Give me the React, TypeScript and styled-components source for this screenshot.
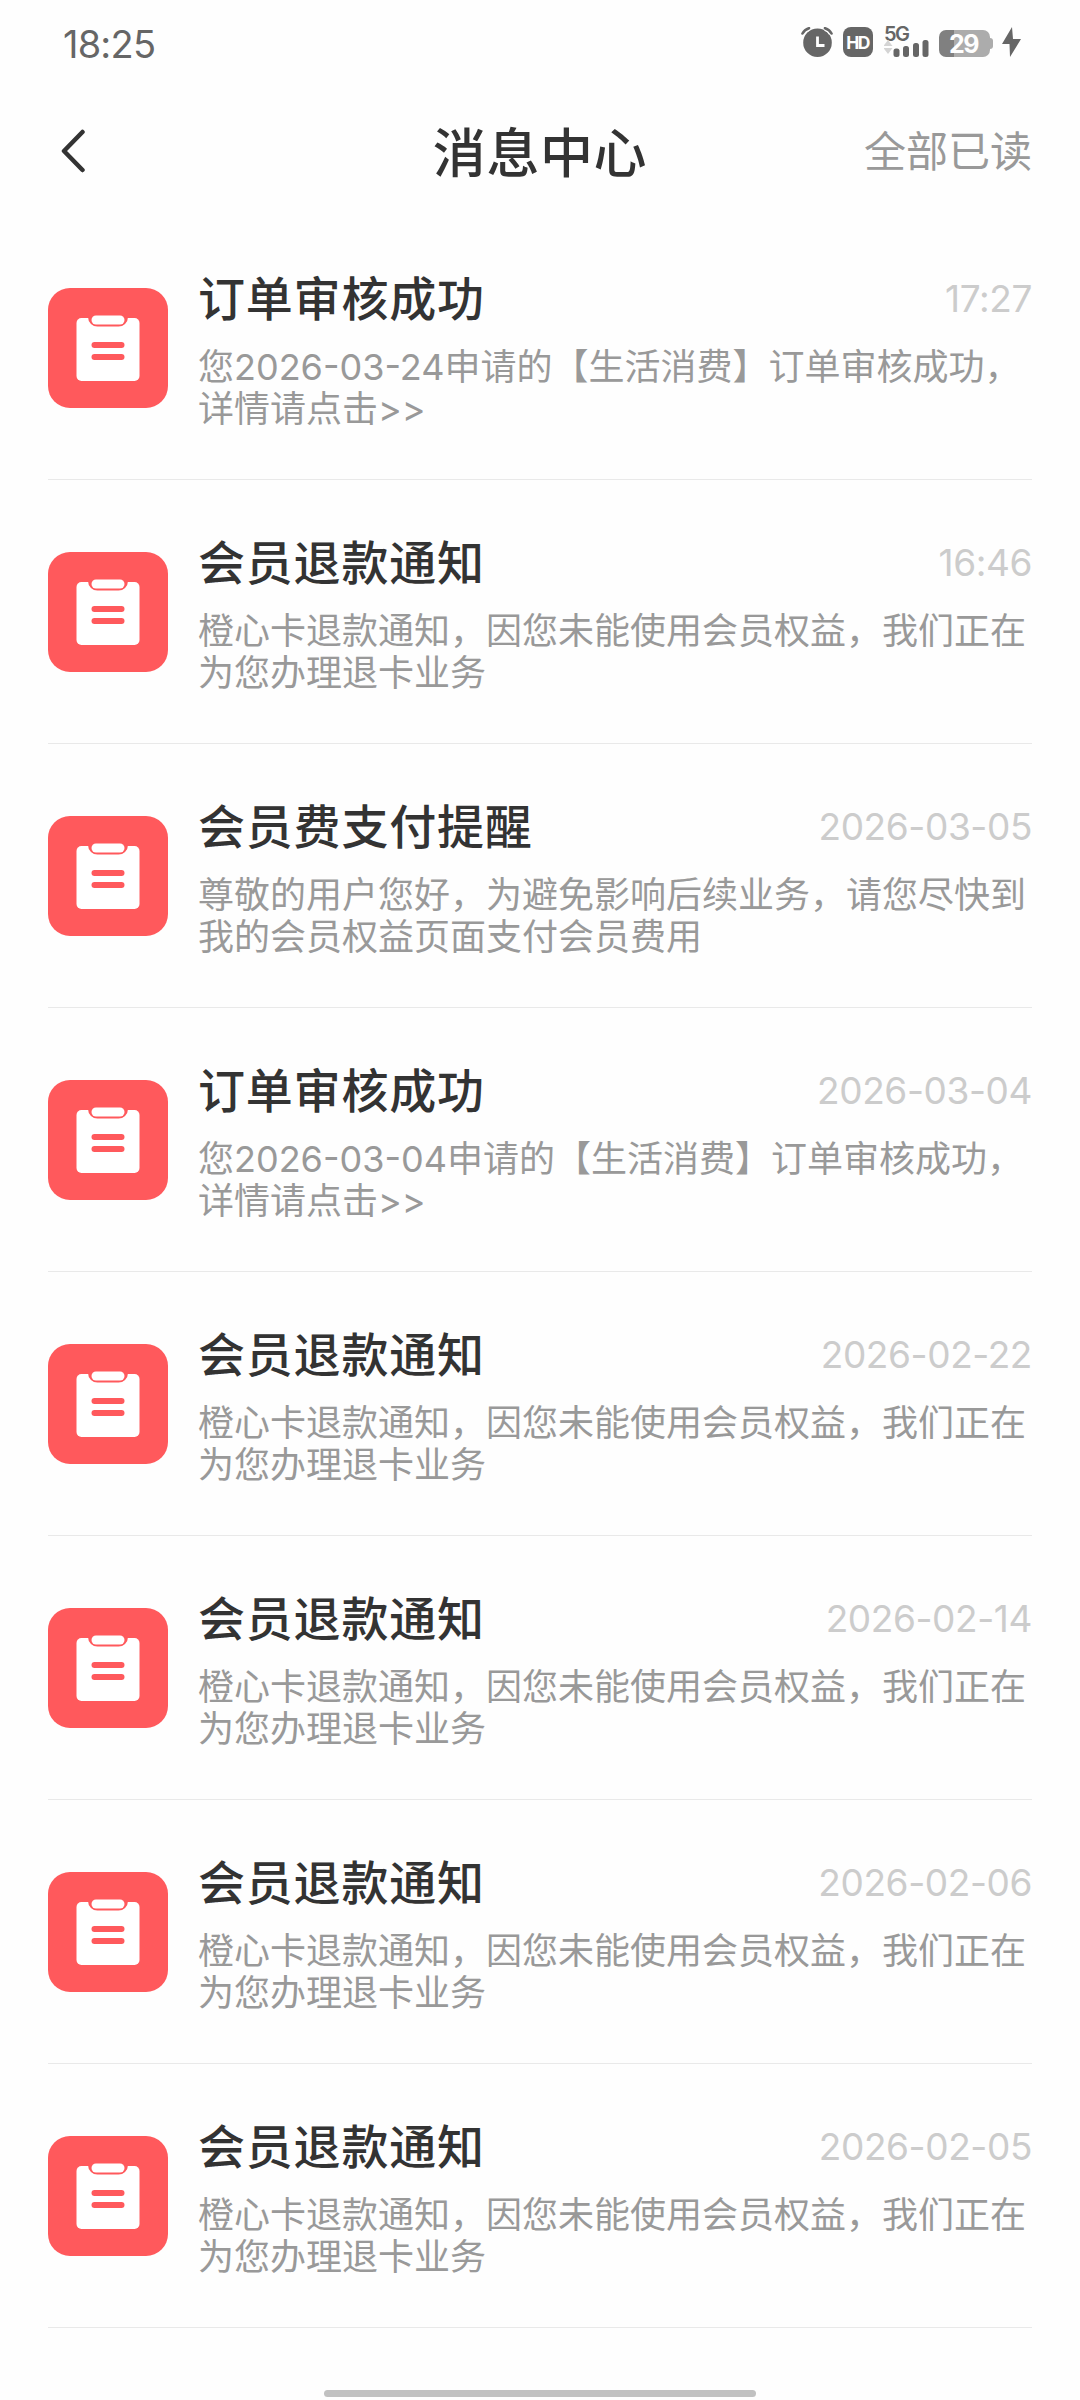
import React from "react";
import styled, { createGlobalStyle } from "styled-components";

const GlobalStyle = createGlobalStyle`
  html, body { margin: 0; padding: 0; background: #fefefe; }
  * { box-sizing: border-box; }
`;

const Screen = styled.div`
  width: 1080px;
  height: 2400px;
  display: flex;
  flex-direction: column;
  background: #fefefe;
  font-family: Inter, "Noto Sans CJK SC", sans-serif;
  overflow: hidden;
`;

const StatusBar = styled.div`
  height: 90px;
  padding: 0 59px 0 63px;
  display: flex;
  justify-content: space-between;
  align-items: flex-start;
  color: #666;
`;

const Clock = styled.div`
  padding-top: 22px;
  font-size: 38px;
  line-height: 44px;
  letter-spacing: -0.8px;
`;

const StatusIcons = styled.div`
  display: flex;
  align-items: flex-end;
  height: 57px;
`;

const HdBadge = styled.div`
  width: 30px;
  height: 30px;
  margin-left: 10px;
  border-radius: 8px;
  background: #666;
  color: #fefefe;
  display: flex;
  align-items: center;
  justify-content: center;
  font-size: 17.5px;
  font-weight: 700;
  letter-spacing: -1.6px;
  padding-right: 1px;
`;

const Network = styled.div`
  width: 46px;
  height: 30px;
  margin-left: 11px;
`;

const NetworkLabel = styled.div`
  height: 15px;
  font-size: 20px;
  line-height: 15px;
  font-weight: 600;
  letter-spacing: -1.6px;
`;

const NetworkSvg = styled.svg`
  display: block;
  margin-top: -3px;
`;

const Battery = styled.div`
  width: 51px;
  height: 27px;
  margin-left: 9px;
  border-radius: 7px;
  background: linear-gradient(to right, #808080 15px, #acacac 15px);
  color: #fefefe;
  display: flex;
  align-items: center;
  justify-content: center;
  font-size: 25px;
  font-weight: 700;
  letter-spacing: -1.5px;
  padding: 1px 2px 0 0;
`;

const BatteryTip = styled.div`
  width: 3px;
  height: 11px;
  margin-bottom: 8px;
  border-radius: 0 4px 4px 0;
  background: #acacac;
`;

const BoltSvg = styled.svg`
  margin-left: 9px;
`;

const NavBar = styled.header`
  height: 126px;
  padding: 0 48px 4px 60px;
  display: grid;
  grid-template-columns: 1fr auto 1fr;
  align-items: center;
`;

const PageTitle = styled.h1`
  margin: 0;
  padding: 5px 12px 0 0;
  font-size: 53px;
  line-height: 60px;
  letter-spacing: 0.6px;
  font-weight: 500;
  color: #333;
`;

const ReadAll = styled.div`
  justify-self: end;
  padding-top: 2px;
  font-size: 42px;
  line-height: 48px;
  color: #999;
`;

const List = styled.main`
  padding: 0 48px;
`;

const Item = styled.article`
  height: 264px;
  display: flex;
  align-items: center;
  border-bottom: 1px solid #e9e9e9;
`;

const Body = styled.div`
  flex: 1;
  align-self: flex-start;
  padding: 53px 0 0 30px;
`;

const Heading = styled.div`
  display: flex;
  justify-content: space-between;
  align-items: center;
  height: 60px;
`;

const Title = styled.h2`
  margin: 0;
  font-size: 47px;
  line-height: 60px;
  letter-spacing: 0.8px;
  font-weight: 500;
  color: #333;
`;

const When = styled.time`
  font-size: 37px;
  line-height: 60px;
  letter-spacing: -0.4px;
  color: #ccc;
`;

const Summary = styled.p`
  margin: 17px 0 0;
  width: 834px;
  font-size: 36px;
  line-height: 42px;
  color: #999;
`;

const HomeBar = styled.div`
  width: 432px;
  height: 7px;
  margin: 62px auto 0;
  border-radius: 4px;
  background: #c1c1c1;
`;

const refund = "橙心卡退款通知，因您未能使用会员权益，我们正在为您办理退卡业务";
const approved = (date: string) => `您${date}申请的【生活消费】订单审核成功，详情请点击>>`;

const messages = [
  { title: "订单审核成功", when: "17:27", text: approved("2026-03-24") },
  { title: "会员退款通知", when: "16:46", text: refund },
  { title: "会员费支付提醒", when: "2026-03-05", text: "尊敬的用户您好，为避免影响后续业务，请您尽快到我的会员权益页面支付会员费用" },
  { title: "订单审核成功", when: "2026-03-04", text: approved("2026-03-04") },
  { title: "会员退款通知", when: "2026-02-22", text: refund },
  { title: "会员退款通知", when: "2026-02-14", text: refund },
  { title: "会员退款通知", when: "2026-02-06", text: refund },
  { title: "会员退款通知", when: "2026-02-05", text: refund },
];

const AlarmIcon = () => (
  <svg width="32" height="30" viewBox="0 0 32 30">
    <circle cx="16.500" cy="15.700" r="14.300" fill="#666" />
    <path d="M1.500 6.500Q3.500 2.500 8 1.200M30.500 6.500Q28.500 2.500 24 1.200" fill="none" stroke="#fefefe" strokeWidth="5.500" />
    <path d="M1.500 6.500Q3.500 2.500 8 1.200M30.500 6.500Q28.500 2.500 24 1.200" fill="none" stroke="#666" strokeWidth="2.600" strokeLinecap="round" />
    <path d="M16.500 9.500V18.500H23.500" fill="none" stroke="#fefefe" strokeWidth="2.800" />
  </svg>
);

const SignalIcon = () => (
  <NetworkSvg width="46" height="18" viewBox="0 0 46 18">
    <path d="M4 1L8.500 7H-0.500ZM4 15L8.500 9H-0.500Z" fill="#d4d4d4" />
    <rect x="9.500" y="9.500" width="6" height="8.500" rx="2.500" fill="#666" />
    <rect x="19" y="7" width="6" height="11" rx="2.500" fill="#666" />
    <rect x="29" y="4" width="6" height="14" rx="2.500" fill="#666" />
    <rect x="38.500" y="1" width="6" height="17" rx="2.500" fill="#666" />
  </NetworkSvg>
);

const ClipboardIcon = () => (
  <svg width="120" height="120" viewBox="0 0 120 120">
    <rect width="120" height="120" rx="22" fill="#ff595c" />
    <rect x="28.500" y="30" width="63" height="63" rx="5" fill="#fff" />
    <path d="M40 29H80A9.500 9.500 0 0 1 70 38.500H50A9.500 9.500 0 0 1 40 29Z" fill="#ff595c" />
    <rect x="43.500" y="27.500" width="33" height="9" rx="4.500" fill="#fff" />
    <rect x="43.500" y="54" width="33" height="6" rx="3" fill="#ff595c" />
    <rect x="43.500" y="66" width="33" height="6" rx="3" fill="#ff595c" />
  </svg>
);

export default function App() {
  return (
    <>
      <GlobalStyle />
      <Screen>
        <StatusBar>
          <Clock>18:25</Clock>
          <StatusIcons>
            <AlarmIcon />
            <HdBadge>HD</HdBadge>
            <Network>
              <NetworkLabel>5G</NetworkLabel>
              <SignalIcon />
            </Network>
            <Battery>29</Battery>
            <BatteryTip />
            <BoltSvg width="19" height="30" viewBox="0 0 19 30">
              <path d="M10 0L0 17H7.500L8 30L19 12H11Z" fill="#666" />
            </BoltSvg>
          </StatusIcons>
        </StatusBar>
        <NavBar>
          <svg width="26" height="44" viewBox="0 0 26 44">
            <path d="M22.500 3L4 22L22.500 41" fill="none" stroke="#333" strokeWidth="4.500" strokeLinecap="round" strokeLinejoin="round" />
          </svg>
          <PageTitle>消息中心</PageTitle>
          <ReadAll>全部已读</ReadAll>
        </NavBar>
        <List>
          {messages.map((m, i) => (
            <Item key={i}>
              <ClipboardIcon />
              <Body>
                <Heading>
                  <Title>{m.title}</Title>
                  <When>{m.when}</When>
                </Heading>
                <Summary>{m.text}</Summary>
              </Body>
            </Item>
          ))}
        </List>
        <HomeBar />
      </Screen>
    </>
  );
}
